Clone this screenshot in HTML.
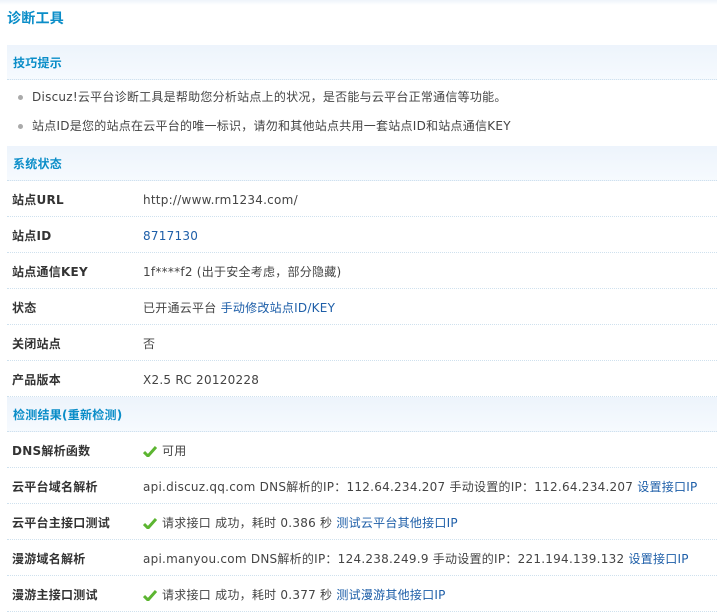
<!DOCTYPE html>
<html><head><meta charset="utf-8"><style>
*{margin:0;padding:0}
body{width:717px;height:614px;overflow:hidden;background:#fff;font:12px "DejaVu Sans","Noto Sans CJK SC",sans-serif;color:#444;letter-spacing:0.25px}
.top{height:5px;background:linear-gradient(#eef4fa,#fff)}
h1{position:absolute;left:7px;top:10px;font-size:14px;font-weight:bold;color:#0a8dc8;line-height:18px}
.band{position:absolute;left:7px;right:0;height:34px;background:linear-gradient(#edf4fc,#f6fafe);border-bottom:1px dotted #cfe1ee;color:#0a8dc8;font-weight:bold;line-height:36px;padding-left:6px}
.li{position:absolute;left:32px;line-height:16px;color:#444}
.li:before{content:"";position:absolute;left:-14px;top:6px;width:5px;height:5px;border-radius:50%;background:#aaa}
.row{position:absolute;left:7px;right:0;height:35px;border-bottom:1px dotted #cfe1ee;line-height:35px}
.row b{position:absolute;left:5px;top:2px;color:#333}
.row span{position:absolute;left:136px;top:2px;white-space:nowrap}
a{color:#1d5ea8;text-decoration:none}
.ck{display:inline-block;width:14px;height:12px;vertical-align:-2px;margin-right:5px}
</style></head><body>
<div class="top"></div>
<h1>诊断工具</h1>
<div class="band" style="top:45px">技巧提示</div>
<div class="li" style="top:89px">Discuz!云平台诊断工具是帮助您分析站点上的状况，是否能与云平台正常通信等功能。</div>
<div class="li" style="top:118px">站点ID是您的站点在云平台的唯一标识，请勿和其他站点共用一套站点ID和站点通信KEY</div>
<div class="band" style="top:146px">系统状态</div>
<div class="row" style="top:181px"><b>站点URL</b><span>http://www.rm1234.com/</span></div>
<div class="row" style="top:217px"><b>站点ID</b><span><a>8717130</a></span></div>
<div class="row" style="top:253px"><b>站点通信KEY</b><span>1f****f2 (出于安全考虑，部分隐藏)</span></div>
<div class="row" style="top:289px"><b>状态</b><span>已开通云平台 <a>手动修改站点ID/KEY</a></span></div>
<div class="row" style="top:325px"><b>关闭站点</b><span>否</span></div>
<div class="row" style="top:361px"><b>产品版本</b><span>X2.5 RC 20120228</span></div>
<div class="band" style="top:397px">检测结果(重新检测)</div>
<div class="row" style="top:432px"><b>DNS解析函数</b><span><svg class="ck" viewBox="0 0 14 12"><path d="M1 7l4 4 8-9" stroke="#5cb531" stroke-width="3" fill="none"/></svg>可用</span></div>
<div class="row" style="top:468px"><b>云平台域名解析</b><span>api.discuz.qq.com DNS解析的IP：112.64.234.207 手动设置的IP：112.64.234.207 <a>设置接口IP</a></span></div>
<div class="row" style="top:504px"><b>云平台主接口测试</b><span><svg class="ck" viewBox="0 0 14 12"><path d="M1 7l4 4 8-9" stroke="#5cb531" stroke-width="3" fill="none"/></svg>请求接口 成功，耗时 0.386 秒 <a>测试云平台其他接口IP</a></span></div>
<div class="row" style="top:540px"><b>漫游域名解析</b><span>api.manyou.com DNS解析的IP：124.238.249.9 手动设置的IP：221.194.139.132 <a>设置接口IP</a></span></div>
<div class="row" style="top:576px"><b>漫游主接口测试</b><span><svg class="ck" viewBox="0 0 14 12"><path d="M1 7l4 4 8-9" stroke="#5cb531" stroke-width="3" fill="none"/></svg>请求接口 成功，耗时 0.377 秒 <a>测试漫游其他接口IP</a></span></div>
</body></html>
